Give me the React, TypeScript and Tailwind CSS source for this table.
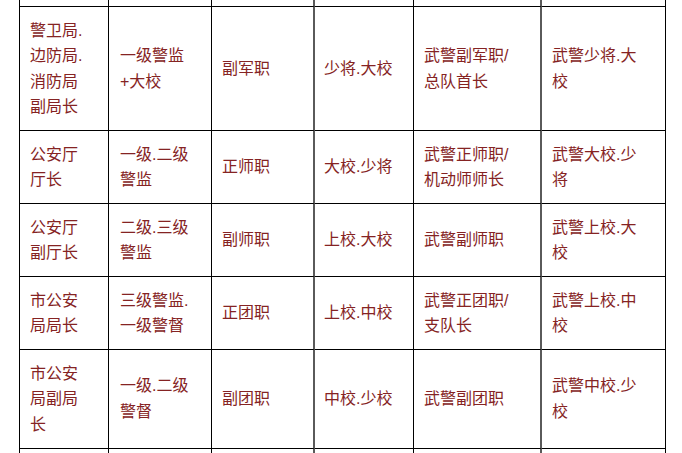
import React from "react";

type Row = string[][];

const rows: Row[] = [
  [["警卫局.", "边防局.", "消防局", "副局长"], ["一级警监", "+大校"], ["副军职"], ["少将.大校"], ["武警副军职/", "总队首长"], ["武警少将.大", "校"]],
  [["公安厅", "厅长"], ["一级.二级", "警监"], ["正师职"], ["大校.少将"], ["武警正师职/", "机动师师长"], ["武警大校.少", "将"]],
  [["公安厅", "副厅长"], ["二级.三级", "警监"], ["副师职"], ["上校.大校"], ["武警副师职"], ["武警上校.大", "校"]],
  [["市公安", "局局长"], ["三级警监.", "一级警督"], ["正团职"], ["上校.中校"], ["武警正团职/", "支队长"], ["武警上校.中", "校"]],
  [["市公安", "局副局", "长"], ["一级.二级", "警督"], ["副团职"], ["中校.少校"], ["武警副团职"], ["武警中校.少", "校"]],
];

const colW = ["w-[90px]", "w-[103px]", "w-[103px]", "w-[99px]", "w-[128px]", "w-[124px]"];
const colB = [
  "border-l border-r border-l-black border-r-black",
  "border-r border-r-black",
  "border-r-2 border-r-[#5a5a5a]",
  "border-r border-r-black",
  "border-r-2 border-r-[#5a5a5a]",
  "border-r border-r-black",
];
const colPad = ["pl-[10px]", "pl-[11px]", "pl-[10px]", "pl-[9px]", "pl-[10px]", "pl-[10px]"];

function Cell({ lines, i }: { lines: string[]; i: number }) {
  return (
    <div className={`${colW[i]} ${colB[i]} ${colPad[i]} border-b border-b-black flex items-center py-[10.5px] pr-[4px]`}>
      <div className="leading-[25.5px] whitespace-nowrap">
        {lines.map((l, k) => (
          <div key={k}>{l}</div>
        ))}
      </div>
    </div>
  );
}

function Stub({ h }: { h: string }) {
  return (
    <div className="flex">
      {colW.map((w, i) => (
        <div key={i} className={`${w} ${colB[i]} ${h} border-b border-b-black`} />
      ))}
    </div>
  );
}

export default function App() {
  return (
    <div
      className="h-[453px] w-[682px] overflow-hidden bg-white text-[16px] text-[#852323]"
      style={{ fontFamily: '"Liberation Sans", "Noto Sans CJK SC", sans-serif' }}
    >
      <div className="pl-[19px]">
        <Stub h="h-[7px]" />
        {rows.map((r, ri) => (
          <div key={ri} className="flex">
            {r.map((c, ci) => (
              <Cell key={ci} lines={c} i={ci} />
            ))}
          </div>
        ))}
        <Stub h="h-[60px]" />
      </div>
    </div>
  );
}
